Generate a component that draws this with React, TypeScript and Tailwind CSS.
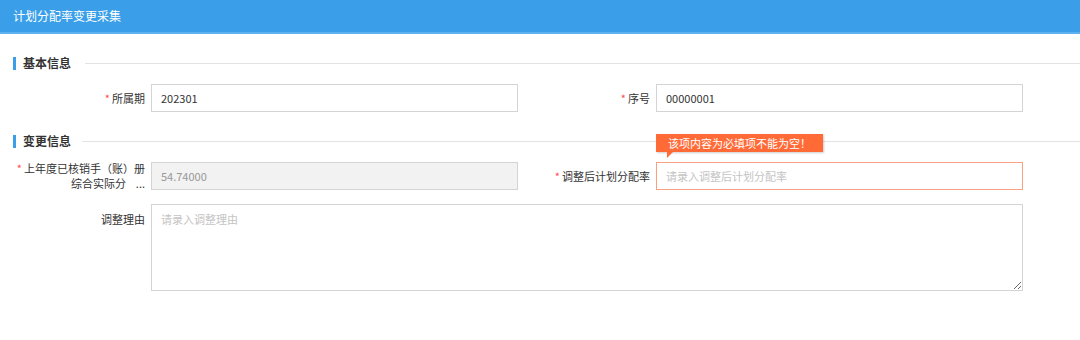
import React from 'react'

const font = { fontFamily: '"Microsoft YaHei", "Noto Sans CJK SC", "Liberation Sans", sans-serif' }

function Section({ title, lineStart }: { title: string; lineStart: string }) {
  return (
    <div className="flex items-center h-[14px] pl-[13px]">
      <span className="w-[3px] h-[13px] bg-[#3a9fe8]" />
      <span className="ml-[7px] text-[12px] font-bold text-[#333]">{title}</span>
      <span className={`flex-1 h-px bg-[#e3e3e3] ${lineStart}`} />
    </div>
  )
}

function Label({ children, required }: { children: React.ReactNode; required?: boolean }) {
  return (
    <div className="w-[138px] shrink-0 pr-[6px] text-right text-[11px] leading-[15px] text-[#333] whitespace-nowrap">
      {required && <span className="text-[#ff4d4f] mr-[2px]">*</span>}
      {children}
    </div>
  )
}

export default function App() {
  return (
    <div className="w-[1080px] h-[340px] bg-white" style={font}>
      {/* Header */}
      <div className="h-[34px] bg-[#3a9fe8] border-b-2 border-[#5db1ee] flex items-center pl-[13px]">
        <span className="text-white text-[12px]">计划分配率变更采集</span>
      </div>

      <div className="pt-[22px]">
        <Section title="基本信息" lineStart="ml-[14px]" />

        <div className="flex pl-[13px] mt-[14px]">
          <div className="flex items-center">
            <Label required>所属期</Label>
            <input
              readOnly
              value="202301"
              className="w-[367px] h-[28px] border border-[#d4d4d4] px-[9px] text-[11px] text-[#333] outline-none"
            />
          </div>
          <div className="flex items-center">
            <Label required>序号</Label>
            <input
              readOnly
              value="00000001"
              className="w-[367px] h-[28px] border border-[#d4d4d4] px-[9px] text-[11px] text-[#333] outline-none"
            />
          </div>
        </div>

        <div className="mt-[22px]">
          <Section title="变更信息" lineStart="ml-[11px]" />
        </div>

        <div className="flex pl-[13px] mt-[13px]">
          <div className="flex items-center">
            <Label required>
              上年度已核销手（账）册
              <br />
              综合实际分&nbsp;&nbsp;&nbsp;&nbsp;...
            </Label>
            <input
              readOnly
              value="54.74000"
              className="w-[367px] h-[28px] border border-[#d4d4d4] bg-[#f2f2f2] px-[9px] text-[11px] text-[#999] outline-none"
            />
          </div>
          <div className="flex items-center">
            <Label required>调整后计划分配率</Label>
            <div className="relative">
              <input
                placeholder="请录入调整后计划分配率"
                className="w-[367px] h-[28px] border border-[#f7a17e] px-[9px] text-[11px] text-[#333] placeholder-[#c4c4c4] outline-none"
              />
              {/* Validation tooltip */}
              <div className="absolute left-0 top-[-28px] h-[18px] px-[12px] bg-[#ff6a37] text-white text-[11px] leading-[18px] whitespace-nowrap shadow-[1px_1px_2px_rgba(0,0,0,0.2)]">
                该项内容为必填项不能为空！
                <span className="absolute left-[11px] top-[18px] w-0 h-0 border-t-[6px] border-t-[#ff6a37] border-r-[6px] border-r-transparent" />
              </div>
            </div>
          </div>
        </div>

        <div className="flex pl-[13px] mt-[13px]">
          <div className="w-[138px] shrink-0 pr-[6px] pt-[7px] text-right text-[11px] text-[#333]">调整理由</div>
          <textarea
            placeholder="请录入调整理由"
            className="w-[872px] h-[87px] border border-[#d4d4d4] px-[9px] py-[6px] text-[11px] text-[#333] placeholder-[#c4c4c4] outline-none"
          />
        </div>
      </div>
    </div>
  )
}
